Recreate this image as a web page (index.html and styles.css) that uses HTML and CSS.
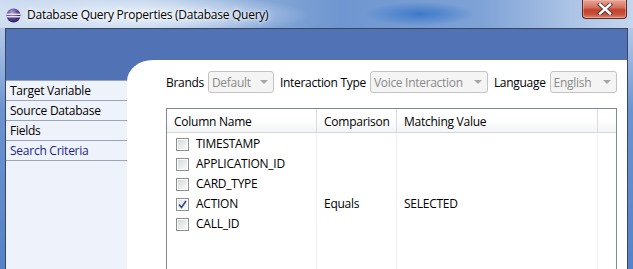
FILE: index.html
```html
<!DOCTYPE html>
<html>
<head>
<meta charset="utf-8">
<link rel="stylesheet" href="styles.css">
</head>
<body>
<div class="window">
  <div class="titlebar">
    <svg class="app-icon" width="15" height="15" viewBox="0 0 15 15">
      <defs>
        <radialGradient id="sph" cx="40%" cy="30%" r="75%">
          <stop offset="0" stop-color="#b3a9dc"/>
          <stop offset="0.5" stop-color="#5a4a95"/>
          <stop offset="1" stop-color="#2a1d5a"/>
        </radialGradient>
      </defs>
      <circle cx="7.5" cy="7.5" r="7" fill="url(#sph)"/>
      <rect x="0.5" y="5.6" width="14" height="1.3" fill="#f4f2fb"/>
      <rect x="0.5" y="8.1" width="14" height="1.3" fill="#f4f2fb"/>
    </svg>
    <span class="title">Database Query Properties (Database Query)</span>
    <div class="close">
      <svg width="16" height="12" viewBox="0 0 16 12">
        <path d="M3 1.5 L13 10.5 M13 1.5 L3 10.5" stroke="#4a3a3a" stroke-width="4.2" stroke-linecap="square"/>
        <path d="M3 1.5 L13 10.5 M13 1.5 L3 10.5" stroke="#ffffff" stroke-width="2.4" stroke-linecap="square"/>
      </svg>
    </div>
  </div>
  <div class="client">
    <nav class="nav">
      <ul class="nav-list">
        <li class="nav-item">Target Variable</li>
        <li class="nav-item">Source Database</li>
        <li class="nav-item">Fields</li>
        <li class="nav-item active">Search Criteria</li>
      </ul>
    </nav>
    <main class="panel">
      <div class="filters">
        <span class="lbl">Brands</span>
        <div class="combo combo-brand"><span>Default</span><i class="arrow"></i></div>
        <span class="lbl">Interaction Type</span>
        <div class="combo combo-type"><span>Voice Interaction</span><i class="arrow"></i></div>
        <span class="lbl">Language</span>
        <div class="combo combo-lang"><span>English</span><i class="arrow"></i></div>
      </div>
      <div class="table">
        <div class="row head">
          <div class="cell">Column Name</div>
          <div class="cell">Comparison</div>
          <div class="cell">Matching Value</div>
          <div class="cell"></div>
        </div>
        <div class="row">
          <div class="cell"><span class="cb"></span>TIMESTAMP</div>
          <div class="cell"></div><div class="cell"></div><div class="cell"></div>
        </div>
        <div class="row">
          <div class="cell"><span class="cb"></span>APPLICATION_ID</div>
          <div class="cell"></div><div class="cell"></div><div class="cell"></div>
        </div>
        <div class="row">
          <div class="cell"><span class="cb"></span>CARD_TYPE</div>
          <div class="cell"></div><div class="cell"></div><div class="cell"></div>
        </div>
        <div class="row">
          <div class="cell"><span class="cb checked"><svg width="9" height="9" viewBox="0 0 9 9"><path d="M1 4.5 L3.5 7.5 L8 1" fill="none" stroke="#2b4a8a" stroke-width="1.6"/></svg></span>ACTION</div>
          <div class="cell">Equals</div><div class="cell">SELECTED</div><div class="cell"></div>
        </div>
        <div class="row">
          <div class="cell"><span class="cb"></span>CALL_ID</div>
          <div class="cell"></div><div class="cell"></div><div class="cell"></div>
        </div>
        <div class="row filler">
          <div class="cell"></div><div class="cell"></div><div class="cell"></div><div class="cell"></div>
        </div>
      </div>
    </main>
  </div>
</div>
</body>
</html>
```
FILE: styles.css
```css
* { box-sizing: border-box; }
html, body { margin: 0; padding: 0; }
body {
  width: 633px;
  height: 269px;
  overflow: hidden;
  font-family: "Segoe UI", "Open Sans", "Noto Sans", sans-serif;
  font-size: 11.5px;
  color: #000;
}
.window {
  width: 633px;
  height: 269px;
  display: flex;
  flex-direction: column;
  background: linear-gradient(to bottom, #c4d6ee 0px, #a9c2e6 40px, #6b93d0 110px, #5582c8 269px);
}
.titlebar {
  height: 28px;
  flex: none;
  display: flex;
  align-items: flex-start;
  background:
    radial-gradient(ellipse 55px 12px at 420px 14px, rgba(50,115,200,0.85), rgba(50,115,200,0) 100%),
    radial-gradient(ellipse 170px 22px at 140px 15px, rgba(236,243,251,0.95), rgba(236,243,251,0) 100%),
    linear-gradient(to right, #cddcf0 0px, #b9cde9 150px, #86a8d8 260px, #6f96d0 340px, #7ea2d6 480px, #abc3e5 570px, #c5d6ee 633px);
}
.app-icon {
  margin: 8px 0 0 6px;
  flex: none;
}
.title {
  margin: 7px 0 0 6px;
  line-height: 16px;
  font-size: 12px;
  letter-spacing: -0.25px;
  text-shadow: 0 0 6px #fff, 0 0 3px #fff;
}
.close {
  margin-left: auto;
  margin-right: 6px;
  width: 45px;
  height: 19px;
  border: 1px solid #5a2a24;
  border-top: none;
  border-radius: 0 0 4px 4px;
  background: linear-gradient(to bottom, #e6a597 0%, #d6735f 40%, #c2412b 55%, #c8513a 80%, #dd8a70 100%);
  box-shadow: inset 0 0 0 1px rgba(255,200,190,0.45);
  display: flex;
  align-items: center;
  justify-content: center;
}
.client {
  flex: 1;
  margin: 0 5px 0 5px;
  border: 1px solid #38465e;
  border-bottom: none;
  background: #5172b4;
  display: flex;
  min-height: 0;
}
.nav {
  width: 121px;
  flex: none;
  padding-top: 51px;
  display: flex;
  flex-direction: column;
}
.nav-list {
  list-style: none;
  margin: 0;
  padding: 0;
  flex: 1;
  background: #eef2fb;
  border-top: 1px solid #9aa3b3;
}
.nav-item {
  height: 20px;
  line-height: 19px;
  padding-left: 4px;
  border-bottom: 1px solid #9ea6b4;
  font-size: 12px;
  letter-spacing: -0.25px;
}
.nav-item.active { color: #1b1f8f; }
.panel {
  flex: 1;
  margin-top: 31px;
  background: #fff;
  border-top-left-radius: 26px 21px;
  padding: 11px 0 0 39px;
  display: flex;
  flex-direction: column;
  min-height: 0;
}
.filters {
  display: flex;
  align-items: center;
  height: 22px;
  font-size: 12px;
  letter-spacing: -0.3px;
}
.lbl { margin-right: 4px; }
.combo {
  height: 22px;
  margin-right: 6px;
  border: 1px solid #c3c3c3;
  border-radius: 3px;
  background: #f4f4f4;
  color: #8a8a8a;
  display: flex;
  align-items: center;
  padding-left: 3px;
  position: relative;
}
.combo span { flex: 1; white-space: nowrap; }
.combo-brand { width: 66px; }
.combo-type { width: 118px; }
.combo-lang { width: 67px; margin-right: 0; }
.arrow {
  width: 0; height: 0;
  border-left: 4px solid transparent;
  border-right: 4px solid transparent;
  border-top: 4px solid #a6a6a6;
  margin-right: 5px;
  flex: none;
}
.table {
  margin-top: 15px;
  width: 451px;
  flex: 1;
  border: 1px solid #828790;
  border-bottom: none;
  display: flex;
  flex-direction: column;
  font-size: 12px;
  letter-spacing: -0.25px;
}
.row {
  display: grid;
  grid-template-columns: 150px 80px 201px 18px;
  height: 20px;
}
.row .cell {
  border-right: 1px solid #edf1f7;
  display: flex;
  align-items: center;
  padding-left: 7px;
  white-space: nowrap;
}
.row .cell:last-child { border-right: none; }
.row.head {
  height: 24px;
  background: linear-gradient(to bottom, #ffffff 0%, #ffffff 40%, #f3f4f6 100%);
  border-bottom: 1px solid #d5d5d5;
}
.row.head .cell {
  border-right: 1px solid #dcdcdc;
  padding-top: 1px;
}
.row.head .cell:last-child { border-right: none; }
.row.filler { flex: 1; height: auto; }
.cb {
  width: 13px;
  height: 13px;
  margin: 2px 7px 0 2px;
  border: 1px solid #8e8f8f;
  background: linear-gradient(135deg, #d4d6da 0%, #eceded 60%, #f8f8f8 100%);
  box-shadow: inset 0 0 0 1px #fff;
  display: flex;
  align-items: center;
  justify-content: center;
  flex: none;
}
.cb.checked {
  background: linear-gradient(135deg, #dfe1e5 0%, #f3f3f3 60%, #fbfbfb 100%);
}
```
